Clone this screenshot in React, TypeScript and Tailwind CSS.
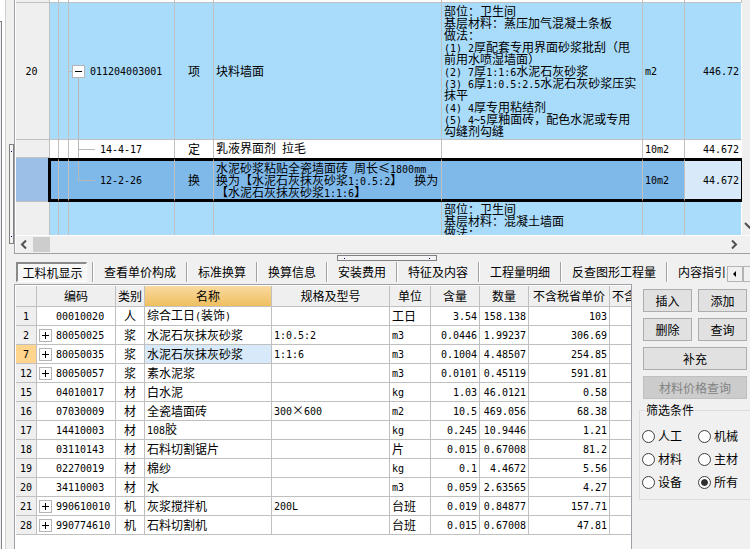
import React, { useState } from "react";
import type { ReactNode } from "react";

/* Latin runs use a half-width monospace face so they line up with the 12px CJK grid. */
function Mixed({ text }: { text: string }) {
  return (
    <>
      {text.split(/([\x21-\x7e ]+)/).map((part, i) =>
        /^[\x20-\x7e]+$/.test(part) ? (
          <span key={i} className="font-['DejaVu_Sans_Mono','Liberation_Mono',monospace] text-[10px]">
            {part}
          </span>
        ) : (
          part
        ),
      )}
    </>
  );
}

function Expander({ open, label, onClick }: { open: boolean; label: string; onClick?: () => void }) {
  return (
    <button
      type="button"
      aria-label={label}
      aria-expanded={open}
      onClick={onClick}
      className="relative flex size-[13px] shrink-0 items-center justify-center border border-[#b4b4b4] bg-white"
    >
      <svg viewBox="0 0 11 11" className="size-[11px]" shapeRendering="crispEdges" aria-hidden="true">
        <rect x="2" y="5" width="7" height="1" fill="#000" />
        {!open && <rect x="5" y="2" width="1" height="7" fill="#000" />}
      </svg>
    </button>
  );
}

const description = [
  "部位：卫生间",
  "基层材料：蒸压加气混凝土条板",
  "做法：",
  "(1) 2厚配套专用界面砂浆批刮（甩",
  "前用水喷湿墙面）",
  "(2) 7厚1:1:6水泥石灰砂浆",
  "(3) 6厚1:0.5:2.5水泥石灰砂浆压实",
  "抹平",
  "(4) 4厚专用粘结剂",
  "(5) 4~5厚釉面砖，配色水泥或专用",
  "勾缝剂勾缝",
];
const nextDescription = ["部位：卫生间", "基层材料：混凝土墙面", "做法："];
const conversion = [
  "水泥砂浆粘贴全瓷墙面砖 周长≤1800mm",
  "换为【水泥石灰抹灰砂浆1:0.5:2】  换为",
  "【水泥石灰抹灰砂浆1:1:6】",
];

function Lines({ lines }: { lines: string[] }) {
  return (
    <>
      {lines.map((line) => (
        <div key={line} className="h-3 whitespace-pre leading-[12px]">
          <Mixed text={line} />
        </div>
      ))}
    </>
  );
}

const cell = "relative border-r border-b border-[#c0c0c0] p-0";
const picked = "relative border-y-[3px] border-y-black border-r border-r-[#c0c0c0] bg-[#7fb9ea] p-0";

function BillTable() {
  const cols = ["w-[34px]", "w-[9px]", "w-[10px]", "w-[106px]", "w-[39px]", "w-[228px]", "", "w-[42px]", "w-[57px]"];
  return (
    <table aria-label="清单" className="w-full table-fixed border-separate border-spacing-0">
      <colgroup>
        {cols.map((w, i) => (
          <col key={i} className={w} />
        ))}
      </colgroup>
      <tbody>
        <tr className="bg-white" aria-hidden="true">
          {cols.map((_, i) => (
            <td key={i} className={`${cell} h-[3px] ${i === 0 ? "bg-[#efefef]" : ""}`} />
          ))}
        </tr>
        <tr className="bg-[#a9dbfb]">
          <th scope="row" className={`${cell} h-[137px] bg-[#efefef] pr-[2px] text-center font-normal`}>
            <Mixed text="20" />
          </th>
          <td className={cell} />
          <td className={cell} />
          <td className={cell}>
            <span className="absolute left-[9px] top-[75px] bottom-0 w-px bg-[#b8b8b8]" />
            <div className="flex items-center">
              <span className="h-px w-[3px] bg-[#b8b8b8]" />
              <Expander open label="折叠 011204003001" />
              <span className="ml-[5px]">
                <Mixed text="011204003001" />
              </span>
            </div>
          </td>
          <td className={`${cell} text-center`}>项</td>
          <td className={`${cell} pl-[2px]`}>块料墙面</td>
          <td className={`${cell} pl-[2px]`}>
            <Lines lines={description} />
          </td>
          <td className={`${cell} pl-[2px]`}>
            <Mixed text="m2" />
          </td>
          <td className={`${cell} border-r-white pr-[2px] text-right`}>
            <Mixed text="446.72" />
          </td>
        </tr>
        <tr className="bg-white">
          <th scope="row" className={`${cell} h-[18px] bg-[#efefef]`} />
          <td className={`${cell} border-b-0`} />
          <td className={`${cell} border-b-0`} />
          <td className={`${cell} border-b-0`}>
            <span className="absolute inset-y-0 left-[9px] w-px bg-[#b8b8b8]" />
            <div className="flex items-center pl-[9px]">
              <span className="h-px w-[17px] bg-[#b8b8b8]" />
              <span className="ml-[5px]">
                <Mixed text="14-4-17" />
              </span>
            </div>
          </td>
          <td className={`${cell} border-b-0 text-center`}>定</td>
          <td className={`${cell} border-b-0 pl-[2px]`}>
            <Mixed text="乳液界面剂 拉毛" />
          </td>
          <td className={`${cell} border-b-0`} />
          <td className={`${cell} border-b-0 pl-[2px]`}>
            <Mixed text="10m2" />
          </td>
          <td className={`${cell} border-b-0 border-r-white pr-[2px] text-right`}>
            <Mixed text="44.672" />
          </td>
        </tr>
        <tr aria-selected="true">
          <th scope="row" className={`${cell} h-[44px] bg-[#9bbfe6]`} />
          <td
            className={`${picked} before:absolute before:-inset-y-[3px] before:-left-[2px] before:w-[3px] before:bg-black before:content-['']`}
          />
          <td className={picked} />
          <td className={picked}>
            <span className="absolute left-[9px] top-0 bottom-1/2 w-px bg-[#b8b8b8]" />
            <div className="flex items-center pl-[9px]">
              <span className="h-px w-[17px] bg-[#b8b8b8]" />
              <span className="ml-[5px]">
                <Mixed text="12-2-26" />
              </span>
            </div>
          </td>
          <td className={`${picked} text-center`}>换</td>
          <td className={`${picked} pl-[2px]`}>
            <Lines lines={conversion} />
          </td>
          <td className={picked} />
          <td className={`${picked} pl-[2px]`}>
            <Mixed text="10m2" />
          </td>
          <td className="border-y-[3px] border-r border-black bg-[#d8eaf9] p-0 pr-[2px] text-right">
            <Mixed text="44.672" />
          </td>
        </tr>
        <tr className="bg-[#a9dbfb]">
          <th scope="row" className={`${cell} h-[137px] bg-[#efefef]`} />
          <td className={cell} />
          <td className={cell} />
          <td className={cell} />
          <td className={cell} />
          <td className={cell} />
          <td className={`${cell} pl-[2px] pt-px align-top`}>
            <Lines lines={nextDescription} />
          </td>
          <td className={cell} />
          <td className={`${cell} border-r-white`} />
        </tr>
      </tbody>
    </table>
  );
}

type Material = [string, boolean, string, string, string, string, string, string, string, string];

const materials: Material[] = [
  ["1", false, "00010020", "人", "综合工日(装饰)", "", "工日", "3.54", "158.138", "103"],
  ["2", true, "80050025", "浆", "水泥石灰抹灰砂浆", "1:0.5:2", "m3", "0.0446", "1.99237", "306.69"],
  ["7", true, "80050035", "浆", "水泥石灰抹灰砂浆", "1:1:6", "m3", "0.1004", "4.48507", "254.85"],
  ["12", true, "80050057", "浆", "素水泥浆", "", "m3", "0.0101", "0.45119", "591.81"],
  ["15", false, "04010017", "材", "白水泥", "", "kg", "1.03", "46.0121", "0.58"],
  ["16", false, "07030009", "材", "全瓷墙面砖", "300×600", "m2", "10.5", "469.056", "68.38"],
  ["17", false, "14410003", "材", "108胶", "", "kg", "0.245", "10.9446", "1.21"],
  ["18", false, "03110143", "材", "石料切割锯片", "", "片", "0.015", "0.67008", "81.2"],
  ["19", false, "02270019", "材", "棉纱", "", "kg", "0.1", "4.4672", "5.56"],
  ["20", false, "34110003", "材", "水", "", "m3", "0.059", "2.63565", "4.27"],
  ["21", true, "990610010", "机", "灰浆搅拌机", "200L", "台班", "0.019", "0.84877", "157.71"],
  ["28", true, "990774610", "机", "石料切割机", "", "台班", "0.015", "0.67008", "47.81"],
];

function MaterialTable() {
  const cols: [string, string][] = [
    ["", "w-[21px]"],
    ["编码", "w-[79px]"],
    ["类别", "w-[29px]"],
    ["名称", "w-[127px]"],
    ["规格及型号", ""],
    ["单位", "w-[41px]"],
    ["含量", "w-[49px]"],
    ["数量", "w-[49px]"],
    ["不含税省单价", "w-[81px]"],
    ["不含", "w-[21px]"],
  ];
  return (
    <table aria-label="工料机显示" className="w-full table-fixed border-separate border-spacing-0">
      <colgroup>
        {cols.map(([, w], i) => (
          <col key={i} className={w} />
        ))}
      </colgroup>
      <thead>
        <tr>
          {cols.map(([name], i) => (
            <th
              key={i}
              scope="col"
              className={`${cell} h-[21px] overflow-hidden whitespace-nowrap font-normal ${
                name === "名称" ? "bg-linear-to-b from-[#f9d99f] to-[#efbf5e]" : "bg-[#efefef]"
              } ${i === 9 ? "border-r-0 pl-[2px] text-left" : "text-center"}`}
            >
              {name}
            </th>
          ))}
        </tr>
      </thead>
      <tbody>
        {materials.map(([no, group, code, kind, name, spec, unit, content, qty, price]) => (
          <tr key={no}>
            <th
              scope="row"
              className={`${cell} h-[19px] text-center font-normal ${no === "7" ? "bg-[#ffd48c]" : "bg-[#efefef]"}`}
            >
              <Mixed text={no} />
            </th>
            <td className={cell}>
              <div className="flex items-center pl-[2px]">
                {group ? <Expander open={false} label={`展开 ${code}`} /> : <span className="w-[13px]" />}
                <span className="ml-[4px]">
                  <Mixed text={code} />
                </span>
              </div>
            </td>
            <td className={`${cell} text-center`}>{kind}</td>
            <td className={`${cell} pl-[2px] ${no === "7" ? "bg-[#d8eaf9]" : ""}`}>
              <Mixed text={name} />
            </td>
            <td className={`${cell} pl-[2px]`}>
              <Mixed text={spec} />
            </td>
            <td className={`${cell} pl-[2px]`}>
              <Mixed text={unit} />
            </td>
            <td className={`${cell} pr-[2px] text-right`}>
              <Mixed text={content} />
            </td>
            <td className={`${cell} pr-[2px] text-right`}>
              <Mixed text={qty} />
            </td>
            <td className={`${cell} pr-[2px] text-right`}>
              <Mixed text={price} />
            </td>
            <td className={`${cell} border-r-0`} />
          </tr>
        ))}
      </tbody>
    </table>
  );
}

function Push({ children, className = "", disabled }: { children: ReactNode; className?: string; disabled?: boolean }) {
  return (
    <button
      type="button"
      disabled={disabled}
      className={`flex h-[23px] items-center justify-center border border-[#adadad] bg-[#e1e1e1] disabled:border-[#bfbfbf] disabled:bg-[#cccccc] disabled:text-[#838383] ${className}`}
    >
      {children}
    </button>
  );
}

const tabs = [
  "工料机显示",
  "查看单价构成",
  "标准换算",
  "换算信息",
  "安装费用",
  "特征及内容",
  "工程量明细",
  "反查图形工程量",
  "内容指引",
];

function TabStrip() {
  return (
    <div className="flex h-5 items-stretch pl-[2px]">
      <div role="tablist" className="flex min-w-0 flex-1 overflow-hidden">
        {tabs.map((tab, i) =>
          i === 0 ? (
            <button
              key={tab}
              type="button"
              role="tab"
              aria-selected="true"
              className="mr-[5px] w-[71px] shrink-0 border border-t-2 border-l-2 border-[#8a8a8a] border-r-white border-b-white bg-[#f7f7f7] pl-px"
            >
              {tab}
            </button>
          ) : (
            <div key={tab} className="flex shrink-0">
              <span className="w-[2px] border-l border-[#a0a0a0] bg-white" />
              <button type="button" role="tab" aria-selected="false" className="whitespace-nowrap px-[10px]">
                {tab}
              </button>
            </div>
          ),
        )}
      </div>
      <div className="mt-1 flex w-[23px] shrink-0 overflow-hidden">
        {["M8 4v6L5 7z", "M6 4v6l3-3z"].map((d, i) => (
          <button
            key={d}
            type="button"
            aria-label={i === 0 ? "向左滚动" : "向右滚动"}
            className="flex h-4 w-4 shrink-0 items-center justify-center border border-[#b4b4b4] bg-[#f0f0f0]"
          >
            <svg viewBox="0 0 14 14" className="size-[14px] shrink-0" aria-hidden="true">
              <path d={d} fill="#000" />
            </svg>
          </button>
        ))}
      </div>
    </div>
  );
}

function Arrow({ d }: { d: string }) {
  return (
    <svg viewBox="0 0 15 15" className="size-[15px] shrink-0" fill="none" stroke="#505050" strokeWidth="2" aria-hidden="true">
      <path d={d} />
    </svg>
  );
}

const filters = ["人工", "机械", "材料", "主材", "设备", "所有"];

function SidePanel() {
  const [filter, setFilter] = useState("所有");
  return (
    <aside className="w-[118px] shrink-0 overflow-hidden pt-[5px]">
      <div className="ml-[11px] mr-[3px] grid grid-cols-2 gap-[6px]">
        <Push>插入</Push>
        <Push>添加</Push>
        <Push>删除</Push>
        <Push>查询</Push>
        <Push className="col-span-2">补充</Push>
        <Push className="col-span-2" disabled>
          材料价格查询
        </Push>
      </div>
      <fieldset className="ml-[7px] mt-[5px] border border-r-0 border-[#dcdcdc] pb-[7px] pl-[2px]">
        <legend className="ml-[3px] px-px leading-[12px]">筛选条件</legend>
        <div className="mt-[10px] grid grid-cols-[56px_1fr] gap-y-[3px]">
          {filters.map((name) => (
            <label key={name} className="flex h-5 items-center gap-[3px]">
              <input
                type="radio"
                name="filter"
                checked={filter === name}
                onChange={() => setFilter(name)}
                className="size-[13px] shrink-0 appearance-none rounded-full border border-[#404040] bg-white bg-clip-content p-[2px] checked:bg-[#303030] checked:shadow-[inset_0_0_0_2px_white] not-checked:p-0"
              />
              {name}
            </label>
          ))}
        </div>
      </fieldset>
    </aside>
  );
}

export default function App() {
  return (
    <div className="flex h-screen overflow-hidden bg-[#f0f0f0] font-['Noto_Sans_CJK_SC',sans-serif] text-[12px] leading-[12px] text-black">
      <div className="flex w-[6px] shrink-0 flex-col border-r border-[#d0d0d0] bg-white">
        <div className="h-[21px]" />
        <div className="w-[2px] flex-1 border-t border-r border-[#808088] bg-[#f0f0f0]" />
      </div>
      <div className="flex w-2 shrink-0 justify-end">
        <div className="mt-36 flex h-[100px] w-[5px] flex-col items-center justify-between border border-[#808080] bg-[#f4f4f4] py-[6px]">
          <i className="size-px bg-[#000080]" />
          <i className="size-px bg-[#000080]" />
        </div>
      </div>
      <main className="flex min-w-0 flex-1 flex-col">
        <section className="flex h-[254px] shrink-0 flex-col border-b border-l border-[#a0a0a8]">
          <div className="flex h-[235px] shrink-0 border-l border-white">
            <div className="min-w-0 flex-1 overflow-hidden">
              <BillTable />
            </div>
            <div className="flex w-2 shrink-0 flex-col justify-end overflow-hidden bg-[#efefef] pb-[2px]">
              <Arrow d="M3 5l4.500 4.500L12 5" />
            </div>
          </div>
          <div className="flex h-[17px] items-center border-t border-l border-white bg-[#f0f0f0] pr-[9px]">
            <Arrow d="M10 3.500L6 7.500l4 4" />
            <div className="ml-[2px] h-[15px] w-[17px] bg-[#cdcdcd]" />
            <div className="flex-1" />
            <Arrow d="M6 3.500l4 4-4 4" />
          </div>
        </section>
        <div className="flex h-2 shrink-0 justify-center pr-[9px] pt-px">
          <div className="mr-[-19px] flex h-[6px] w-[100px] items-center justify-between border border-[#808080] bg-[#f4f4f4] px-[6px]">
            <i className="size-px bg-[#000080]" />
            <i className="size-px bg-[#000080]" />
          </div>
        </div>
        <TabStrip />
        <div className="mt-[2px] flex min-h-0 flex-1">
          <section className="min-w-0 flex-1 overflow-hidden border-t border-r border-l border-[#a0a0a8] bg-white pl-px pt-px">
            <MaterialTable />
          </section>
          <SidePanel />
        </div>
      </main>
    </div>
  );
}
